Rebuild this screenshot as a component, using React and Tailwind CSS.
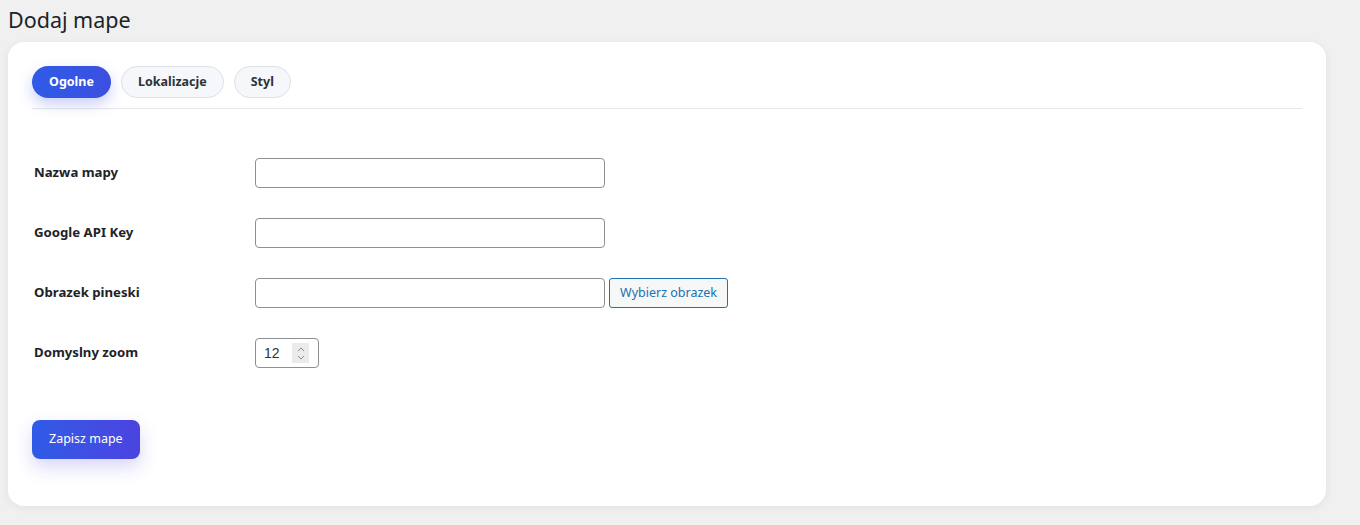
export default function App() {
  const rows = [
    { label: "Nazwa mapy" },
    { label: "Google API Key" },
    { label: "Obrazek pineski", button: true },
  ];

  return (
    <div
      className="min-h-[525px] bg-[#f0f0f1] pl-2 pr-[34px] text-[#1d2327]"
      style={{ fontFamily: '"Noto Sans", "Open Sans", sans-serif' }}
    >
      <h1 className="pt-[5px] pb-[7px] text-[21.5px] leading-[30px] font-normal text-[#1d2327]">
        Dodaj mape
      </h1>

      <div className="rounded-2xl bg-white px-6 pt-6 pb-[47px] shadow-[0_2px_10px_rgba(0,0,0,0.06)]">
        {/* tabs */}
        <div className="flex gap-[10px] border-b border-[#e5e7eb] pb-[10px]">
          <button className="h-8 rounded-full bg-gradient-to-r from-[#2f5be6] to-[#3b4fe0] px-[17px] text-[12.5px] font-bold text-white shadow-[0_6px_14px_rgba(59,79,224,0.28)]">
            Ogolne
          </button>
          <button className="h-8 rounded-full border border-[#dde1e8] bg-[#f6f7fb] px-4 text-[12.5px] font-bold text-[#2c3338]">
            Lokalizacje
          </button>
          <button className="h-8 rounded-full border border-[#dde1e8] bg-[#f6f7fb] px-4 text-[12.5px] font-bold text-[#2c3338]">
            Styl
          </button>
        </div>

        {/* form */}
        <div className="flex flex-col gap-[30px] pt-[49px]">
          {rows.map((r) => (
            <div key={r.label} className="flex items-center">
              <label className="w-[223px] pl-[2px] text-[13.2px] font-bold">{r.label}</label>
              <input
                type="text"
                className="h-[30px] w-[350px] rounded-[4px] border border-[#8c8f94] bg-white px-2 text-[14px] outline-none"
              />
              {r.button && (
                <button className="ml-1 h-[30px] rounded-[3px] border border-[#2271b1] bg-[#f6f7f7] px-[10px] text-[12.5px] text-[#2271b1]">
                  Wybierz obrazek
                </button>
              )}
            </div>
          ))}

          <div className="flex items-center">
            <label className="w-[223px] pl-[2px] text-[13.2px] font-bold">Domyslny zoom</label>
            <div className="flex h-[30px] w-[64px] items-center rounded-[4px] border border-[#8c8f94] bg-white pl-[8px] pr-[9px]">
              <span
                className="flex-1 text-[14px] text-[#2c3338]"
                style={{ fontFamily: '"Liberation Sans", Arial, sans-serif' }}
              >
                12
              </span>
              <span className="flex h-[20px] w-[17px] flex-col items-center justify-center gap-[3px] bg-[#ebebeb]">
                <svg width="8" height="5" viewBox="0 0 8 5">
                  <path d="M1 4 L4 1 L7 4" fill="none" stroke="#8a8a8a" strokeWidth="1" />
                </svg>
                <svg width="8" height="5" viewBox="0 0 8 5">
                  <path d="M1 1 L4 4 L7 1" fill="none" stroke="#8a8a8a" strokeWidth="1" />
                </svg>
              </span>
            </div>
          </div>
        </div>

        <button className="mt-[52px] h-[39px] rounded-lg bg-gradient-to-r from-[#2f5be6] to-[#4a43e0] px-[17px] text-[12.5px] text-white shadow-[0_8px_18px_rgba(74,67,224,0.22)]">
          Zapisz mape
        </button>
      </div>
    </div>
  );
}
